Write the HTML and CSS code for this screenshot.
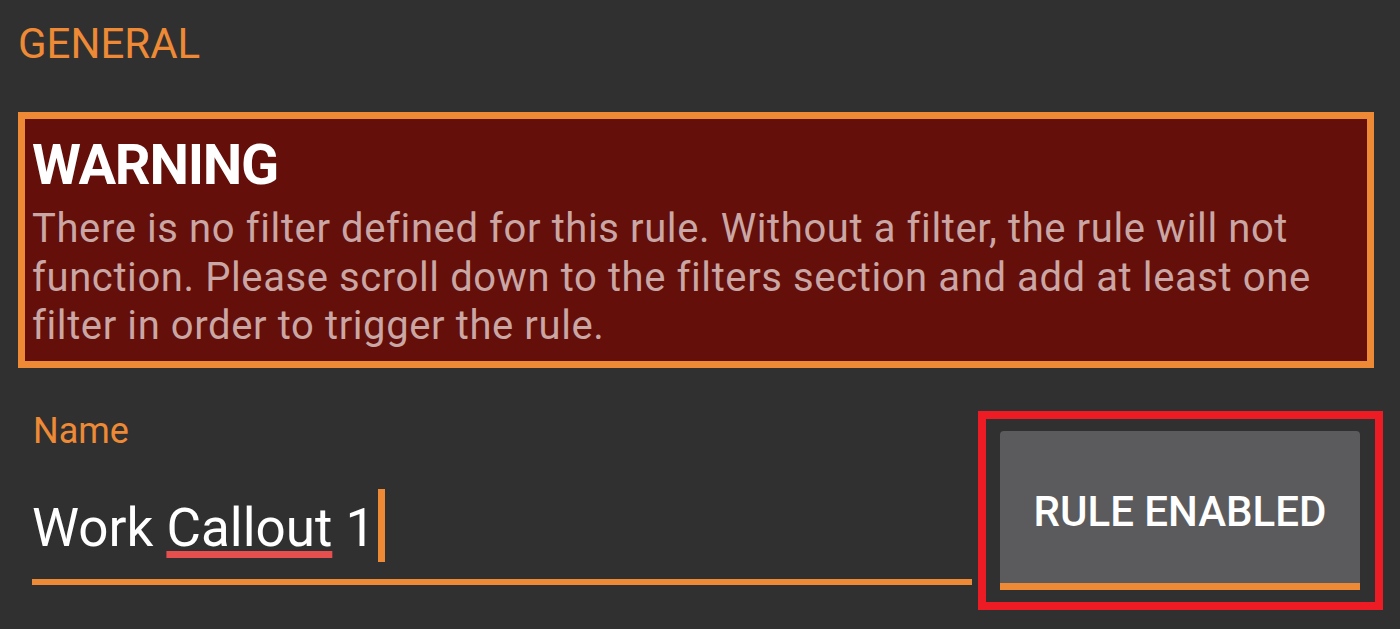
FILE: index.html
```html
<!DOCTYPE html>
<html>
<head>
<meta charset="utf-8">
<link rel="stylesheet" href="styles.css">
</head>
<body>
<div class="page">
  <h2 class="section-title">GENERAL</h2>
  <div class="warning">
    <h3 class="warning-title">WARNING</h3>
    <p class="warning-text">There is no filter defined for this rule. Without a filter, the rule will not<br>function. Please scroll down to the filters section and add at least one<br>filter in order to trigger the rule.</p>
  </div>
  <div class="form-row">
    <div class="field">
      <div class="field-label">Name</div>
      <div class="field-input">Work <span class="misspelled">Callout</span> 1<span class="cursor"></span></div>
    </div>
    <div class="highlight">
      <button class="toggle">RULE ENABLED</button>
    </div>
  </div>
</div>
</body>
</html>
```
FILE: styles.css
```css
html, body {
  margin: 0;
  padding: 0;
  background: #303030;
  font-family: Roboto, "Noto Sans", sans-serif;
  overflow: hidden;
}
.page {
  padding-top: 19px;
  height: 610px;
}
.section-title {
  margin: 0 0 43px 18px;
  font-size: 42px;
  line-height: 50px;
  font-weight: 400;
  color: #ee8a35;
}
.warning {
  margin-left: 18px;
  width: 1356px;
  box-sizing: border-box;
  border: 7px solid #ee8a35;
  background: #640f0a;
  padding: 14px 8px 10px 7px;
  height: 256px;
}
.warning-title {
  margin: 0 0 8px 0;
  font-size: 56px;
  line-height: 64px;
  font-weight: 700;
  letter-spacing: -1.3px;
  color: #ffffff;
}
.warning-text {
  margin: 0;
  font-size: 40px;
  line-height: 48.5px;
  letter-spacing: 0.6px;
  color: #caa6a4;
  white-space: nowrap;
}
.form-row {
  display: flex;
  align-items: flex-start;
  margin-top: 43px;
  padding-left: 32px;
  gap: 6px;
}
.field {
  width: 940px;
}
.field-label {
  padding-left: 1px;
  font-size: 36px;
  line-height: 40px;
  color: #ee8a35;
}
.field-input {
  margin-top: 37px;
  padding: 0 0 11px 0;
  border-bottom: 6px solid #ee8a35;
  font-size: 53px;
  line-height: 80px;
  height: 80px;
  color: #ffffff;
  white-space: nowrap;
}
.misspelled {
  text-decoration-line: underline;
  text-decoration-color: #e5504f;
  text-decoration-thickness: 7px;
  text-underline-offset: 5px;
  text-decoration-skip-ink: none;
}
.cursor {
  display: inline-block;
  width: 7px;
  height: 73px;
  margin-left: 3px;
  background: #ee8a35;
  vertical-align: -16px;
}
.highlight {
  border: 8px solid #ed1c24;
  padding: 12px 15px 12px 14px;
}
.toggle {
  display: flex;
  align-items: center;
  justify-content: center;
  width: 360px;
  height: 159px;
  box-sizing: border-box;
  padding: 9px 0 0 0;
  border: none;
  border-bottom: 7px solid #ee8a35;
  border-radius: 4px 4px 0 0;
  background: #5b5b5d;
  color: #ffffff;
  font-family: Roboto, "Noto Sans", sans-serif;
  font-weight: 500;
  font-size: 42px;
}
```
